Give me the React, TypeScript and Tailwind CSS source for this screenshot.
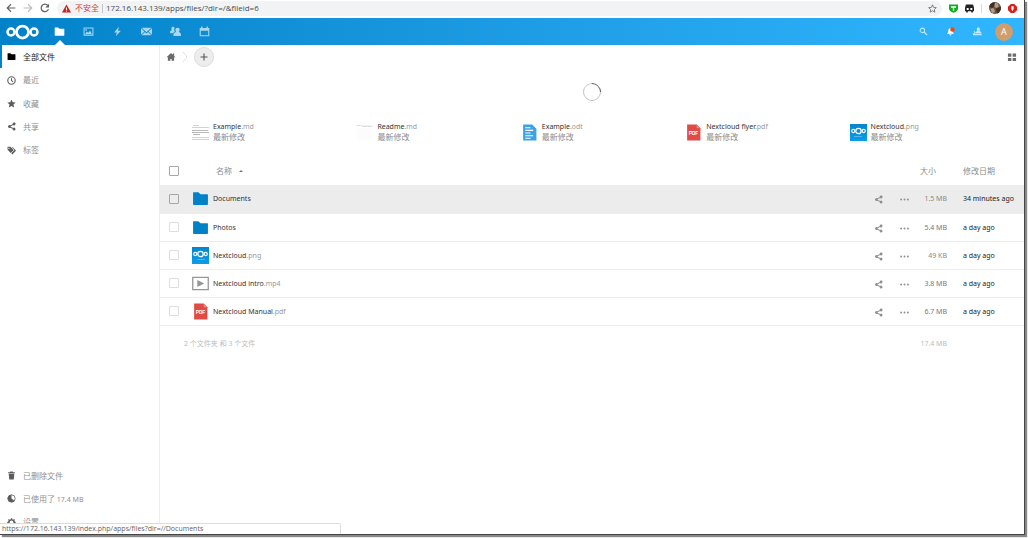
import type { ReactNode } from "react";

type IconProps = { className?: string };

type FileRow = {
  name: string;
  ext?: string;
  kind: "folder" | "image" | "video" | "pdf";
  size: string;
  sizeClass: string;
  modified: string;
};

const files: FileRow[] = [
  { name: "Documents", kind: "folder", size: "1.5 MB", sizeClass: "text-[#8a8a8a]", modified: "34 minutes ago" },
  { name: "Photos", kind: "folder", size: "5.4 MB", sizeClass: "text-[#777777]", modified: "a day ago" },
  { name: "Nextcloud", ext: ".png", kind: "image", size: "49 KB", sizeClass: "text-[#8a8a8a]", modified: "a day ago" },
  { name: "Nextcloud intro", ext: ".mp4", kind: "video", size: "3.8 MB", sizeClass: "text-[#777777]", modified: "a day ago" },
  { name: "Nextcloud Manual", ext: ".pdf", kind: "pdf", size: "6.7 MB", sizeClass: "text-[#777777]", modified: "a day ago" },
];

function Svg({ className, children }: IconProps & { children: ReactNode }) {
  return (
    <svg viewBox="0 0 16 16" fill="currentColor" className={`shrink-0 ${className ?? ""}`} aria-hidden="true">
      {children}
    </svg>
  );
}

const FolderIcon = ({ className }: IconProps) => (
  <Svg className={className}>
    <path d="M1.5 2c-.25 0-.5.25-.5.5v11c0 .26.24.5.5.5h13c.26 0 .5-.24.5-.5v-9c0-.25-.25-.5-.5-.5H8L6 2z" />
  </Svg>
);

const ShareIcon = ({ className }: IconProps) => (
  <Svg className={className}>
    <path d="M12.5 1a2.5 2.5 0 0 0-2.5 2.5v.3L5.9 5.9A2.5 2.5 0 1 0 5.9 10l4.1 2.2v.3a2.5 2.5 0 1 0 .9-1.9L6.5 8.3V7.7l4.4-2.3A2.5 2.5 0 1 0 12.5 1z" />
  </Svg>
);

const ClockIcon = ({ className }: IconProps) => (
  <Svg className={className}>
    <circle cx="8" cy="8" r="6.6" fill="none" stroke="currentColor" strokeWidth="2" />
    <path d="M8 4v4.2l2.8 2" fill="none" stroke="currentColor" strokeWidth="1.8" />
  </Svg>
);

const StarIcon = ({ className }: IconProps) => (
  <Svg className={className}>
    <path d="M8 .8l2.2 4.9 5.3.5-4 3.6 1.2 5.3L8 12.3l-4.7 2.8 1.2-5.3-4-3.6 5.3-.5z" />
  </Svg>
);

const TagIcon = ({ className }: IconProps) => (
  <Svg className={className}>
    <path
      fillRule="evenodd"
      d="M1 1.500v5l5.800 5.800 5-5L6 1.500zM3.300 3a1.200 1.200 0 1 1 0 2.400 1.200 1.200 0 0 1 0-2.400z"
    />
    <path d="M8.200 2l5 5.200-5.600 5.800 2 2L15.500 9V7.500L10.200 2z" />
  </Svg>
);

const TrashIcon = ({ className }: IconProps) => (
  <Svg className={className}>
    <path d="M6 1L5 2H2v2h12V2h-3l-1-1zM3 5l1 10h8l1-10z" />
  </Svg>
);

const QuotaIcon = ({ className }: IconProps) => (
  <Svg className={className}>
    <circle cx="8" cy="8" r="6.500" fill="none" stroke="currentColor" strokeWidth="1.400" />
    <path d="M8 1.200a6.800 6.800 0 1 0 5.500 10.800L8 8z" />
  </Svg>
);

const GearIcon = ({ className }: IconProps) => (
  <Svg className={className}>
    <circle cx="8" cy="8" r="4.7" fill="none" stroke="currentColor" strokeWidth="2.6" />
    <path
      d="M8 .5v3M8 12.5v3M.5 8h3M12.5 8h3M2.7 2.7l2 2M11.300 11.300l2 2M2.700 13.300l2-2M11.300 4.700l2-2"
      stroke="currentColor"
      strokeWidth="2.4"
    />
  </Svg>
);

const HomeIcon = ({ className }: IconProps) => (
  <Svg className={className}>
    <path d="M8 1.500L.8 8.500H3V14h4v-3h2v3h4V8.500h2.200L13 6.400V2.500h-2v2z" />
  </Svg>
);

const PictureIcon = ({ className }: IconProps) => (
  <Svg className={className}>
    <path
      fillRule="evenodd"
      d="M.8 2h14.400v12H.8zM2.300 3.500v9h11.400v-9zM3 11.500l2.500-3.600 2 2 2.800-3.100L13 11.500zM4.500 4.500a1.200 1.200 0 1 1 0 2.400 1.200 1.200 0 0 1 0-2.400z"
    />
  </Svg>
);

const ActivityIcon = ({ className }: IconProps) => (
  <Svg className={className}>
    <path d="M10 1L3 9.300h4L5.500 15 13 6.800H8.800z" />
  </Svg>
);

const MailIcon = ({ className }: IconProps) => (
  <Svg className={className}>
    <path d="M0 3.300v9.400l5-4.600zM.8 2.500h14.400L8 9zM16 3.300l-5 4.800 5 4.600zM5.800 8.800L.8 13.500h14.400l-5-4.700L8 10.800z" />
  </Svg>
);

const PeopleIcon = ({ className }: IconProps) => (
  <Svg className={className}>
    <path d="M4.600 1C3 1 2 2 2 3.500 2 4.800 2.500 5 2.600 6.200 1 7 .1 7.200 0 8.500L.2 10.500h4c.6-1 2-1.500 3-2.200C6 7.300 6 5.500 6.400 4 6.900 2 6.200 1 4.600 1z" />
    <path d="M11 2.500c-2 0-3.200 1.300-3.100 3 .1 1.600.7 1.800.8 3.100C6 9.900 5.300 10 5.100 11.800L5 14.500h11l-.2-2.700c-.1-1.700-.9-2-2.700-3.200.2-1.300.8-1.500.9-3.100.1-1.700-1-3-3-3z" />
  </Svg>
);

const CalendarIcon = ({ className }: IconProps) => (
  <Svg className={className}>
    <path fillRule="evenodd" d="M3 .8h2v2h6v-2h2v2h2V15H1V2.800h2zM2.600 7v6.500h10.800V7z" />
  </Svg>
);

const SearchIcon = ({ className }: IconProps) => (
  <Svg className={className}>
    <circle cx="6" cy="6" r="4" fill="none" stroke="currentColor" strokeWidth="1.8" />
    <path d="M9 9l5.500 5.500" stroke="currentColor" strokeWidth="2.2" />
  </Svg>
);

const BellIcon = ({ className }: IconProps) => (
  <Svg className={className}>
    <path d="M8 2c-3 0-4 2.500-4 5 0 2.400-1 3.600-2.500 5h13C13 10.600 12 9.400 12 7c0-2.500-1-5-4-5zM6 13a2 2 0 0 0 4 0z" />
    <circle cx="11.500" cy="4.500" r="4" fill="#ff4402" />
  </Svg>
);

const ContactsIcon = ({ className }: IconProps) => (
  <Svg className={className}>
    <path d="M9.500 1C7.500 1 6.600 2.200 6.700 4c.1 1.700.9 2 .9 3.300C5 8.500 4 9 4 11h11c0-2-1-2.500-3.600-3.700 0-1.300.8-1.600.9-3.300.1-1.800-.8-3-2.800-3z" />
    <path d="M3 6.500c-1.200 0-1.700.8-1.600 1.900.1 1 .5 1.200.5 2C.6 11 0 11.500 0 14.500h15.500V12H3.300z" />
  </Svg>
);

const LogoRings = ({ className }: IconProps) => (
  <svg viewBox="0 0 66 32" fill="none" stroke="currentColor" className={`shrink-0 ${className ?? ""}`} aria-hidden="true">
    <circle cx="33" cy="16" r="12" strokeWidth="5.500" />
    <circle cx="10" cy="16" r="7" strokeWidth="5" />
    <circle cx="56" cy="16" r="7" strokeWidth="5" />
  </svg>
);

const ImageThumb = () => (
  <span className="flex size-[17px] shrink-0 flex-col items-center justify-center gap-px bg-linear-to-t from-[#0a9ee8] to-[#0785cd] text-white">
    <LogoRings className="h-2 w-[15px]" />
    <span className="h-px w-2 bg-[#53b6ea]" />
  </span>
);

const PdfThumb = () => (
  <svg viewBox="0 0 32 32" className="size-[17px] shrink-0" aria-hidden="true">
    <path d="M4 1h18l7 7v23H4z" fill="#df4b46" />
    <path d="M22 1l7 7h-7z" fill="#e98883" />
    <text x="16" y="20" textAnchor="middle" fontSize="9" fontWeight="700" fill="#fff" fontFamily="Liberation Sans, sans-serif">
      PDF
    </text>
  </svg>
);

const OdtThumb = () => (
  <svg viewBox="0 0 32 32" className="size-[17px] shrink-0" aria-hidden="true">
    <path d="M4 1h17l8 8v22H4z" fill="#3ba2e8" />
    <path d="M8 7h10M8 12h15M8 17h10M8 22h15M8 27h10" stroke="#fff" strokeWidth="1.900" />
  </svg>
);

const VideoThumb = () => (
  <svg viewBox="0 0 16 16" className="size-[17px] shrink-0" aria-hidden="true">
    <path d="M.7 2.2h14.600v11.600H.7z" fill="none" stroke="#969696" strokeWidth="1.200" />
    <path d="M5 4.800l6.500 3.200L5 11.200z" fill="#969696" />
  </svg>
);

const MarkdownThumb = ({ short = false }: { short?: boolean }) => (
  <svg viewBox="0 0 17 17" className="size-[17px] shrink-0" aria-hidden="true">
    {short ? (
      <>
        <path d="M0 1.500h17" stroke="#f0f0f0" />
        <path d="M1 1.500h4M6 2.500h10" stroke="#e0e0e0" />
        <path d="M1 4h15v12H1z" fill="#fcfcfc" />
      </>
    ) : (
      <>
        <path d="M1 1.500h6M0 3.500h17M0 13.500h17M0 15.500h17" stroke="#d2d2d2" />
        <path d="M0 6.500h16M0 8.500h17M1 10.500h7" stroke="#b8b8b8" />
      </>
    )}
  </svg>
);

function FileIcon({ kind }: { kind: FileRow["kind"] }) {
  if (kind === "folder") return <FolderIcon className="size-[17px] text-[#0082c9]" />;
  if (kind === "image") return <ImageThumb />;
  if (kind === "video") return <VideoThumb />;
  return <PdfThumb />;
}

const recommendations = [
  { name: "Example", ext: ".md", icon: <MarkdownThumb /> },
  { name: "Readme", ext: ".md", icon: <MarkdownThumb short /> },
  { name: "Example", ext: ".odt", icon: <OdtThumb /> },
  { name: "Nextcloud flyer", ext: ".pdf", icon: <PdfThumb /> },
  { name: "Nextcloud", ext: ".png", icon: <ImageThumb /> },
];

const apps = [
  { label: "文件", Icon: FolderIcon },
  { label: "照片", Icon: PictureIcon },
  { label: "动态", Icon: ActivityIcon },
  { label: "邮件", Icon: MailIcon },
  { label: "联系人", Icon: PeopleIcon },
  { label: "日历", Icon: CalendarIcon },
];

const views = [
  { label: "全部文件", Icon: FolderIcon },
  { label: "最近", Icon: ClockIcon },
  { label: "收藏", Icon: StarIcon },
  { label: "共享", Icon: ShareIcon },
  { label: "标签", Icon: TagIcon },
];

const footerLinks = [
  { label: "已删除文件", Icon: TrashIcon },
  { label: "已使用了", amount: "17.4 MB", Icon: QuotaIcon },
  { label: "设置", Icon: GearIcon },
];

function BrowserBar() {
  return (
    <div className="flex h-[18px] items-center bg-white pb-[2px] text-[#5f6368]">
      <div className="flex w-[57px] shrink-0 items-center gap-[7px] pl-[6px]">
        <button type="button" aria-label="后退">
          <Svg className="size-[10px]">
            <path d="M15 8H2.500M8 2L2 8l6 6" fill="none" stroke="currentColor" strokeWidth="1.8" />
          </Svg>
        </button>
        <button type="button" aria-label="前进" className="text-[#b9bbbe]">
          <Svg className="size-[10px]">
            <path d="M1 8h12.500M8 2l6 6-6 6" fill="none" stroke="currentColor" strokeWidth="1.8" />
          </Svg>
        </button>
        <button type="button" aria-label="重新加载">
          <Svg className="size-[10px]">
            <path d="M13.500 10A6 6 0 1 1 12.500 4" fill="none" stroke="currentColor" strokeWidth="2" />
            <path d="M14.500 1v6h-6z" />
          </Svg>
        </button>
      </div>
      <div className="flex h-[15px] min-w-0 flex-1 items-center rounded-full bg-[#f1f3f4] pr-[5px] pl-[5px]">
        <Svg className="size-[9px] text-[#c5221f]">
          <path fillRule="evenodd" d="M8 1l8 14H0zM7 6v4.500h2V6zM7 11.500v2h2v-2z" />
        </Svg>
        <span className="ml-[4px] text-[8px] whitespace-nowrap text-[#d1433f]">不安全</span>
        <span className="mx-[3px] h-[9px] w-px bg-[#c4c6c9]" />
        <input
          type="text"
          aria-label="地址"
          readOnly
          value="172.16.143.139/apps/files/?dir=/&fileid=6"
          className="min-w-0 flex-1 bg-transparent font-['Open_Sans',sans-serif] text-[8px] text-[#4a4d51] outline-none"
        />
        <button type="button" aria-label="收藏此页">
          <Svg className="size-[9px]">
            <path
              d="M8 1.500l2 4.500 4.800.5-3.600 3.200 1 4.800L8 12l-4.200 2.500 1-4.800L1.200 6.500 6 6z"
              fill="none"
              stroke="currentColor"
              strokeWidth="1.4"
            />
          </Svg>
        </button>
      </div>
      <div className="flex shrink-0 items-center gap-[7px] px-[7px]">
        <Svg className="size-[9px] text-[#0fae1e]">
          <path fillRule="evenodd" d="M0 1h16v7c0 3-3 6-8 7.500C3 14 0 11 0 8zM3.500 4v2.500H6.800V12h2.400V6.500h3.300V4z" />
        </Svg>
        <Svg className="size-[9px] text-[#222222]">
          <path
            fillRule="evenodd"
            d="M3 1h10q2 0 2 2l1 4v5q0 1-1 1h-1v2h-3v-2H5v2H2v-2H1q-1 0-1-1V7l1-4q0-2 2-2zM3 7v3.500h3.500V7zM9.500 7v3.500H13V7z"
          />
        </Svg>
        <span className="h-[9px] w-px bg-[#d5d7da]" />
        <svg viewBox="0 0 16 16" className="size-3 rounded-full" aria-hidden="true">
          <path d="M0 0h16v16H0z" fill="#6d5745" />
          <path d="M0 0h7l2 5-5 3-4-2zM9 9l7-3v8l-5 2z" fill="#3b3029" />
          <path d="M8 1l4 1 1 4-3 2-3-2zM2 9l4-1 2 5-4 2z" fill="#b99a85" />
        </svg>
        <Svg className="size-[9px] text-[#da1f1a]">
          <path d="M5 0h6l5 5v6l-5 5H5l-5-5V5z" />
          <path d="M6 4h4v5l-2 4-2-4z" fill="#fff" />
        </Svg>
      </div>
    </div>
  );
}

function AppHeader() {
  return (
    <header className="flex h-[27px] items-center bg-linear-to-r from-[#0082c9] to-[#30b6ff] text-white">
      <a href="#home" aria-label="Nextcloud" className="flex w-[45px] shrink-0 pl-[6px]">
        <LogoRings className="h-4 w-[33px]" />
      </a>
      <nav className="flex h-full flex-1">
        {apps.map(({ label, Icon }, i) => (
          <a key={label} href="#app" aria-label={label} className="relative flex w-[29px] items-center justify-center">
            <Icon className={i === 0 ? "size-[11px]" : "size-[11px] opacity-65"} />
            {i === 0 && (
              <span className="absolute bottom-0 border-x-[5px] border-b-[5px] border-x-transparent border-b-white" />
            )}
          </a>
        ))}
      </nav>
      <div className="flex items-center pr-[11px]">
        <button type="button" aria-label="搜索" className="flex w-[27px] justify-center">
          <SearchIcon className="size-[9px] opacity-70" />
        </button>
        <button type="button" aria-label="通知" className="flex w-[27px] justify-center">
          <BellIcon className="size-[9px]" />
        </button>
        <button type="button" aria-label="联系人" className="flex w-[27px] justify-center">
          <ContactsIcon className="size-[9px] opacity-70" />
        </button>
        <button
          type="button"
          aria-label="账户"
          className="ml-[4px] flex size-[18px] items-center justify-center rounded-full bg-[#d09e6d] text-[9px]"
        >
          A
        </button>
      </div>
    </header>
  );
}

function Sidebar() {
  return (
    <aside className="flex w-40 shrink-0 flex-col justify-between border-r border-[#ededed] text-[8px]">
      <nav className="flex h-[117px] flex-col">
        {views.map(({ label, Icon }, i) => (
          <a
            key={label}
            href="#view"
            className={
              i === 0
                ? "flex flex-1 items-center gap-[7px] border-l-2 border-[#0082c9] pl-[5px] text-[#222222]"
                : "flex flex-1 items-center gap-[7px] pl-[7px] text-[#8f8f8f]"
            }
          >
            <Icon className={i === 0 ? "size-[9px] text-black" : "size-[9px] text-[#5c5c5c]"} />
            {label}
          </a>
        ))}
      </nav>
      <nav className="flex h-[70px] flex-col">
        {footerLinks.map(({ label, amount, Icon }) => (
          <a key={label} href="#settings" className="flex flex-1 items-center gap-[7px] pl-[7px] text-[#8f8f8f]">
            <Icon className="size-[9px] text-[#5c5c5c]" />
            <span>
              {label}
              {amount && <span className="text-[7px]"> {amount}</span>}
            </span>
          </a>
        ))}
      </nav>
    </aside>
  );
}

function Checkbox({ label, strong }: { label: string; strong?: boolean }) {
  return (
    <input
      type="checkbox"
      aria-label={label}
      className={
        strong
          ? "block size-[10px] appearance-none rounded-[1px] border border-[#a6a6a6]"
          : "block size-[10px] appearance-none rounded-[1px] border border-[#dedede]"
      }
    />
  );
}

function FileTable() {
  return (
    <table className="w-full table-fixed text-left text-[7px] leading-none">
      <colgroup>
        <col className="w-8" />
        <col />
        <col className="w-[26px]" />
        <col className="w-[26px]" />
        <col className="w-[30px]" />
        <col className="w-[77px]" />
      </colgroup>
      <thead>
        <tr className="h-[28px] text-[8px] text-[#8c8c8c]">
          <th className="pl-[9px]">
            <Checkbox label="选择全部" strong />
          </th>
          <th className="pl-6 font-normal">
            <button type="button" className="flex items-center gap-[7px]">
              名称
              <span className="border-x-2 border-b-2 border-x-transparent border-b-[#777777]" />
            </button>
          </th>
          <th />
          <th />
          <th className="pr-[11px] text-right font-normal whitespace-nowrap">大小</th>
          <th className="pl-[16px] font-normal">修改日期</th>
        </tr>
      </thead>
      <tbody>
        {files.map((file, i) => (
          <tr key={file.name + file.kind} className={i === 0 ? "h-[28px] border-b border-[#ededed] bg-[#ececec]" : "h-[28px] border-b border-[#ededed]"}>
            <td className="pl-[9px]">
              <Checkbox label={file.name} strong={i === 0} />
            </td>
            <td>
              <a href="#file" className="flex items-center gap-[4px] text-[#333333]">
                <FileIcon kind={file.kind} />
                <span>
                  {file.name}
                  <span className="text-[#999999]">{file.ext}</span>
                </span>
              </a>
            </td>
            <td>
              <button type="button" aria-label="共享" className="mx-auto block pt-[2px] text-[#8f8f8f]">
                <ShareIcon className="size-[9px]" />
              </button>
            </td>
            <td>
              <button type="button" aria-label="更多" className="mx-auto block pt-[2px] text-[#8f8f8f]">
                <Svg className="size-[9px]">
                  <circle cx="2" cy="8" r="1.7" />
                  <circle cx="8" cy="8" r="1.7" />
                  <circle cx="14" cy="8" r="1.7" />
                </Svg>
              </button>
            </td>
            <td className={`text-right whitespace-nowrap ${file.sizeClass}`}>{file.size}</td>
            <td className="pl-[16px] whitespace-nowrap text-[#222222]">{file.modified}</td>
          </tr>
        ))}
      </tbody>
      <tfoot>
        <tr className="h-9 text-[#bcbcbc]">
          <td colSpan={4} className="pl-6">
            2 个文件夹 和 3 个文件
          </td>
          <td className="text-right whitespace-nowrap">17.4 MB</td>
          <td />
        </tr>
      </tfoot>
    </table>
  );
}

export default function App() {
  return (
    <div className="flex min-h-screen bg-white pr-[3px] pb-[3px] font-['Noto_Sans','Noto_Sans_CJK_SC',sans-serif]">
      <div className="relative flex flex-1 flex-col border-r border-b border-[#444444] bg-white shadow-[2px_2px_1px_#888888]">
        <BrowserBar />
        <AppHeader />
        <div className="flex flex-1">
          <Sidebar />
          <main className="min-w-0 flex-1">
            <div className="flex h-6 items-center pr-[7px] pl-[6px]">
              <a href="#home" aria-label="主页" className="text-[#6b6b6b]">
                <HomeIcon className="size-[10px]" />
              </a>
              <Svg className="mx-[4px] h-4 w-[10px] text-[#d0d0d0]">
                <path d="M5 0l6 8-6 8" fill="none" stroke="currentColor" />
              </Svg>
              <button
                type="button"
                aria-label="新建"
                className="flex size-5 items-center justify-center rounded-full border border-[#dcdcdc] bg-[#ededed] text-[#555555]"
              >
                <Svg className="size-2">
                  <path d="M8 1v14M1 8h14" stroke="currentColor" strokeWidth="2.2" />
                </Svg>
              </button>
              <button type="button" aria-label="切换网格视图" className="ml-auto text-[#6b6b6b]">
                <Svg className="size-[10px]">
                  <path d="M1.500 2.500h5.500v5H1.500zM9 2.500h5.500v5H9zM1.500 9.500h5.500v5H1.500zM9 9.500h5.500v5H9z" />
                </Svg>
              </button>
            </div>
            <div className="flex h-[46px] items-center justify-center">
              <span className="size-[18px] rotate-45 rounded-full border border-[#c4c4c4] border-t-[#555555]" />
            </div>
            <ul className="grid h-[34px] grid-cols-5 items-center pr-[10px] pl-8 leading-[10px]">
              {recommendations.map((item) => (
                <li key={item.name + item.ext}>
                  <a href="#file" className="flex items-center gap-[4px]">
                    {item.icon}
                    <span className="text-[7px] text-[#333333]">
                      {item.name}
                      <span className="text-[#999999]">{item.ext}</span>
                      <span className="block text-[8px] text-[#8c8c8c]">最新修改</span>
                    </span>
                  </a>
                </li>
              ))}
            </ul>
            <div className="pt-[8px]">
              <FileTable />
            </div>
          </main>
        </div>
        <div className="absolute bottom-0 left-0 h-[11px] w-1/3 truncate rounded-tr-[2px] border-t border-r border-[#dadce0] bg-white pl-[2px] font-['Open_Sans',sans-serif] text-[7px] leading-[10px] text-[#5f6368]">
          https://172.16.143.139/index.php/apps/files?dir=//Documents
        </div>
      </div>
    </div>
  );
}
